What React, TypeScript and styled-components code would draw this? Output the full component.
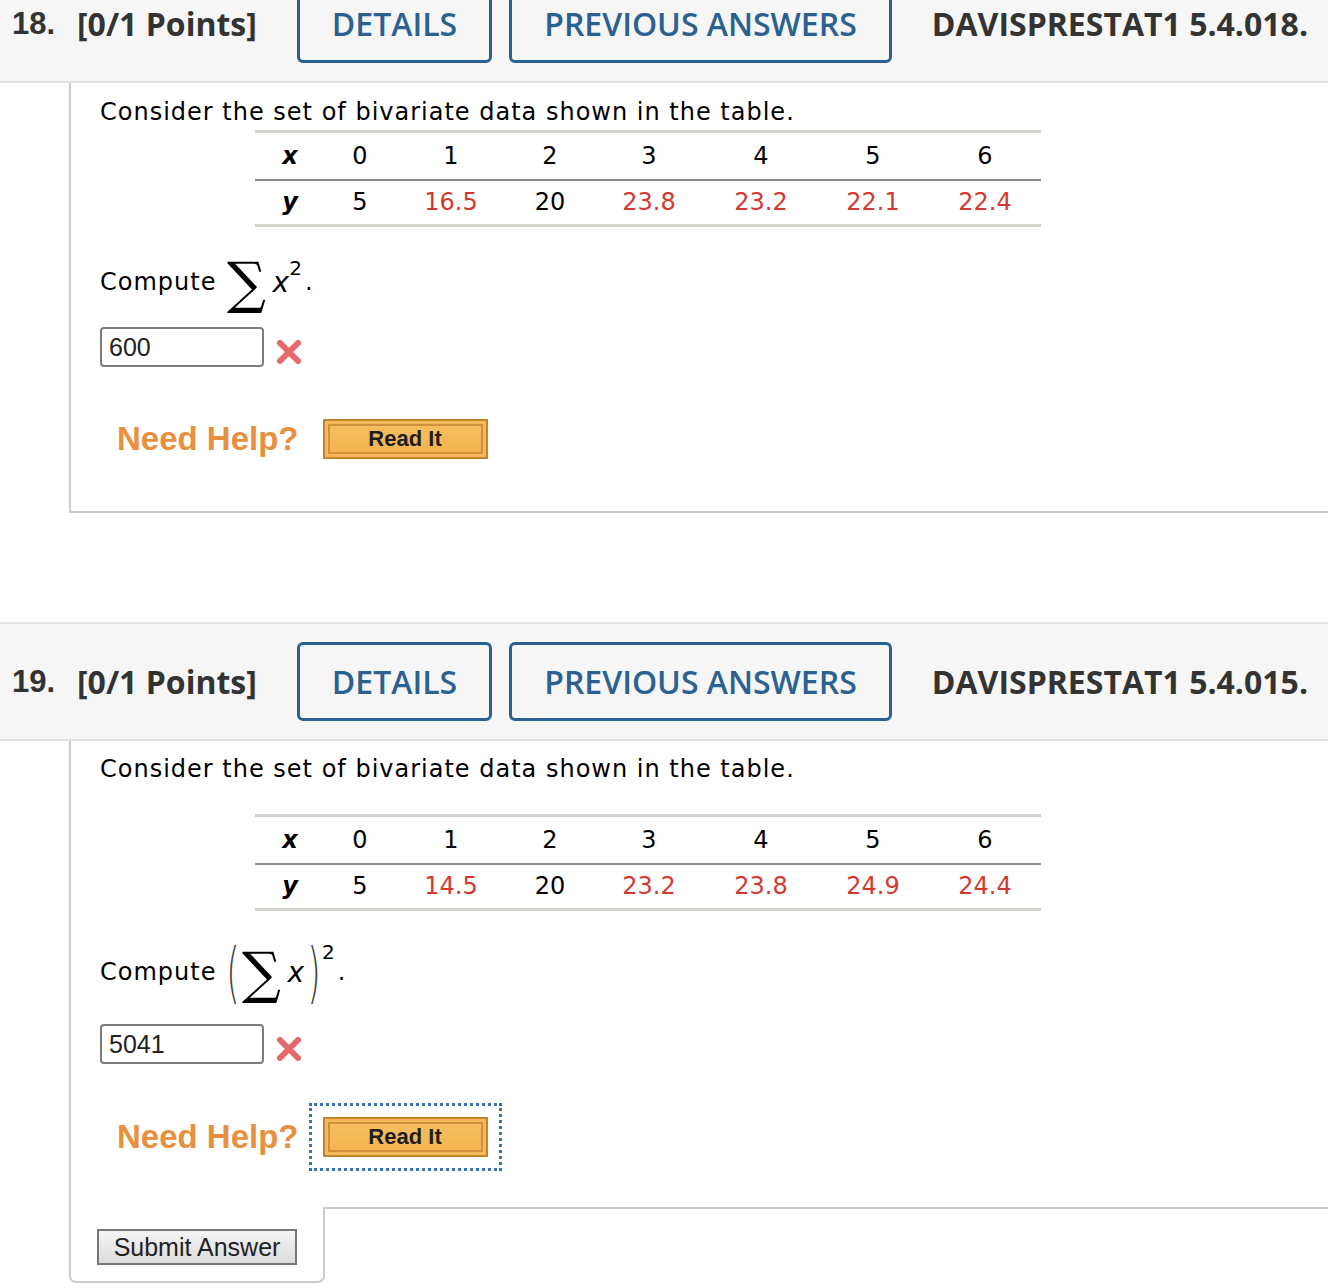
import React from "react";
import styled, { createGlobalStyle } from "styled-components";

const GlobalStyle = createGlobalStyle`
  html, body { margin: 0; padding: 0; background: #ffffff; }
  body { overflow: hidden; }
`;

const Page = styled.div`
  margin-top: -36px;
  width: 1328px;
`;

const Question = styled.section<{ $gap?: number }>`
  margin-top: ${(p) => p.$gap ?? 0}px;
`;

const Header = styled.header`
  display: flex;
  align-items: center;
  height: 115px;
  background: #f6f6f6;
  border-top: 2px solid #e2e2e2;
  border-bottom: 2px solid #e2e2e2;
  padding: 0 20px 0 12px;
  color: #333333;
`;

const QNum = styled.span`
  font-family: "Liberation Sans", Arial, sans-serif;
  font-weight: 700;
  font-size: 31px;
  width: 65px;
`;

const Points = styled.span`
  font-family: "Open Sans", sans-serif;
  font-weight: 700;
  font-size: 32px;
  width: 220px;
`;

const HeadButton = styled.button<{ $w: number }>`
  width: ${(p) => p.$w}px;
  height: 79px;
  margin-right: 17px;
  border: 3px solid #2b6190;
  border-radius: 6px;
  background: transparent;
  color: #2b6190;
  font-family: "Open Sans", sans-serif;
  font-weight: 600;
  font-size: 32px;
  padding: 0;
  display: flex;
  align-items: center;
  justify-content: center;
`;

const Ref = styled.span`
  margin-left: auto;
  font-family: "Open Sans", sans-serif;
  font-weight: 700;
  font-size: 32px;
`;

const Body = styled.div<{ $pt: number; $pb: number; $bottom?: boolean }>`
  margin-left: 69px;
  border-left: 2px solid #cccccc;
  border-bottom: ${(p) => (p.$bottom ? "2px solid #cccccc" : "none")};
  padding: ${(p) => p.$pt}px 0 ${(p) => p.$pb}px 29px;
  font-family: "DejaVu Sans", Verdana, sans-serif;
  font-size: 24px;
  color: #000;
`;

const Prompt = styled.div`
  line-height: 30px;
  letter-spacing: 1px;
`;

const DataTable = styled.table<{ $mt: number }>`
  margin: ${(p) => p.$mt}px 0 0 155px;
  border-collapse: collapse;
  border-top: 3px solid #d6d2cd;
  border-bottom: 3px solid #d6d2cd;
  font-size: 24px;
`;

const Row = styled.tr<{ $divider?: boolean }>`
  height: ${(p) => (p.$divider ? 48 : 46)}px;
  border-bottom: ${(p) => (p.$divider ? "2px solid #8c8c8c" : "none")};
`;

const Cell = styled.td<{ $red?: boolean; $w: number }>`
  width: ${(p) => p.$w}px;
  padding: 0;
  text-align: center;
  color: ${(p) => (p.$red ? "#d23a2e" : "#000")};
`;

const VarCell = styled.td`
  width: 70px;
  padding: 0;
  text-align: center;
  font-weight: 700;
  font-style: italic;
`;

const ComputeLine = styled.div<{ $mt: number; $h: number }>`
  display: flex;
  align-items: center;
  height: ${(p) => p.$h}px;
  margin-top: ${(p) => p.$mt}px;
  letter-spacing: 1px;
`;

const Sigma = styled.span<{ $ml: number }>`
  font-family: "DejaVu Serif", serif;
  font-size: 52px;
  line-height: 1;
  margin: 2px 7px 0 ${(p) => p.$ml}px;
  display: inline-block;
  transform: scale(1.05, 1.08);
  letter-spacing: 0;
`;

const MathVar = styled.span`
  font-family: "DejaVu Sans", Verdana, sans-serif;
  font-style: italic;
  font-size: 28px;
  letter-spacing: 0;
`;

const Sup = styled.span<{ $rise: number }>`
  display: inline-block;
  font-size: 20px;
  align-self: flex-start;
  margin-top: ${(p) => p.$rise}px;
  letter-spacing: 0;
`;

const Dot = styled.span`
  margin-left: 3px;
`;

const Paren = styled.span<{ $ml?: number }>`
  font-family: "DejaVu Sans", sans-serif;
  font-weight: 200;
  color: #444;
  font-size: 46px;
  display: inline-block;
  transform: scale(0.75, 1.45);
  margin: 0 -1px 0 ${(p) => p.$ml ?? -1}px;
  letter-spacing: 0;
`;

const AnswerRow = styled.div<{ $mt: number }>`
  display: flex;
  align-items: center;
  margin-top: ${(p) => p.$mt}px;
  gap: 11px;
`;

const AnswerInput = styled.input`
  width: 164px;
  height: 40px;
  box-sizing: border-box;
  border: 2px solid #7d7d7d;
  border-radius: 4px;
  padding: 0 7px;
  font-family: "Liberation Sans", Arial, sans-serif;
  font-size: 25px;
  color: #222;
  background: #fff;
`;

const HelpRow = styled.div<{ $mt: number }>`
  display: flex;
  align-items: center;
  margin: ${(p) => p.$mt}px 0 0 17px;
  gap: 24px;
`;

const NeedHelp = styled.span`
  font-family: "Liberation Sans", Arial, sans-serif;
  font-weight: 700;
  font-size: 33px;
  color: #e8903e;
`;

const ReadIt = styled.button<{ $focused?: boolean }>`
  width: 165px;
  height: 40px;
  border: 2px solid #c9822c;
  background: linear-gradient(#f7c064, #f3b24c);
  box-shadow: inset 0 0 0 3px #f5b95a, inset 0 0 0 5px #cf913d;
  font-family: "Liberation Sans", Arial, sans-serif;
  font-weight: 700;
  font-size: 22px;
  color: #1e1e1e;
  padding: 0;
  outline: ${(p) => (p.$focused ? "3px dotted #3b72b5" : "none")};
  outline-offset: 11px;
`;

const Footer = styled.div`
  display: flex;
  margin-left: 69px;
`;

const SubmitTab = styled.div`
  width: 200px;
  padding: 22px 26px 16px 26px;
  border: 2px solid #cccccc;
  border-top: none;
  border-radius: 0 0 7px 7px;
`;

const Filler = styled.div`
  flex: 1;
  border-top: 2px solid #cccccc;
`;

const SubmitButton = styled.button`
  width: 200px;
  height: 36px;
  border: 2px solid #777;
  background: linear-gradient(#f4f4f4, #dcdcdc);
  font-family: "Liberation Sans", Arial, sans-serif;
  font-size: 25px;
  color: #222;
  padding: 0;
`;

const WrongMark = () => (
  <svg width="28" height="28" viewBox="0 0 28 28" style={{ marginTop: 10 }}>
    <g stroke="#e35d5d" strokeWidth="6" strokeLinecap="round" opacity="0.92">
      <line x1="5" y1="5" x2="23" y2="23" />
      <line x1="23" y1="5" x2="5" y2="23" />
    </g>
  </svg>
);

const widths = [70, 112, 86, 112, 112, 112, 112];

type TableProps = { xs: string[]; ys: string[]; mt: number };

const Data = ({ xs, ys, mt }: TableProps) => (
  <DataTable $mt={mt}>
    <tbody>
      <Row $divider>
        <VarCell>x</VarCell>
        {xs.map((v, i) => (
          <Cell key={i} $w={widths[i]}>
            {v}
          </Cell>
        ))}
      </Row>
      <Row>
        <VarCell>y</VarCell>
        {ys.map((v, i) => (
          <Cell key={i} $w={widths[i]} $red={v.includes(".") || i >= 3}>
            {v}
          </Cell>
        ))}
      </Row>
    </tbody>
  </DataTable>
);

const HeaderBar = ({ num, code }: { num: string; code: string }) => (
  <Header>
    <QNum>{num}</QNum>
    <Points>[0/1 Points]</Points>
    <HeadButton $w={195}>DETAILS</HeadButton>
    <HeadButton $w={383}>PREVIOUS ANSWERS</HeadButton>
    <Ref>{code}</Ref>
  </Header>
);

const xs = ["0", "1", "2", "3", "4", "5", "6"];

export default function App() {
  return (
    <>
      <GlobalStyle />
      <Page>
        <Question>
          <HeaderBar num="18." code="DAVISPRESTAT1 5.4.018." />
          <Body $pt={14} $pb={52} $bottom>
            <Prompt>Consider the set of bivariate data shown in the table.</Prompt>
            <Data xs={xs} ys={["5", "16.5", "20", "23.8", "23.2", "22.1", "22.4"]} mt={3} />
            <ComputeLine $mt={26} $h={58}>
              Compute
              <Sigma $ml={12}>∑</Sigma>
              <MathVar>x</MathVar>
              <Sup $rise={3}>2</Sup>
              <Dot>.</Dot>
            </ComputeLine>
            <AnswerRow $mt={16}>
              <AnswerInput defaultValue="600" />
              <WrongMark />
            </AnswerRow>
            <HelpRow $mt={52}>
              <NeedHelp>Need Help?</NeedHelp>
              <ReadIt>Read It</ReadIt>
            </HelpRow>
          </Body>
        </Question>
        <Question $gap={109}>
          <HeaderBar num="19." code="DAVISPRESTAT1 5.4.015." />
          <Body $pt={13} $pb={50}>
            <Prompt>Consider the set of bivariate data shown in the table.</Prompt>
            <Data xs={xs} ys={["5", "14.5", "20", "23.2", "23.8", "24.9", "24.4"]} mt={30} />
            <ComputeLine $mt={29} $h={64}>
              Compute
              <Paren $ml={8}>(</Paren>
              <Sigma $ml={2}>∑</Sigma>
              <MathVar>x</MathVar>
              <Paren $ml={1}>)</Paren>
              <Sup $rise={0}>2</Sup>
              <Dot>.</Dot>
            </ComputeLine>
            <AnswerRow $mt={20}>
              <AnswerInput defaultValue="5041" />
              <WrongMark />
            </AnswerRow>
            <HelpRow $mt={53}>
              <NeedHelp>Need Help?</NeedHelp>
              <ReadIt $focused>Read It</ReadIt>
            </HelpRow>
          </Body>
          <Footer>
            <SubmitTab>
              <SubmitButton>Submit Answer</SubmitButton>
            </SubmitTab>
            <Filler />
          </Footer>
        </Question>
      </Page>
    </>
  );
}
